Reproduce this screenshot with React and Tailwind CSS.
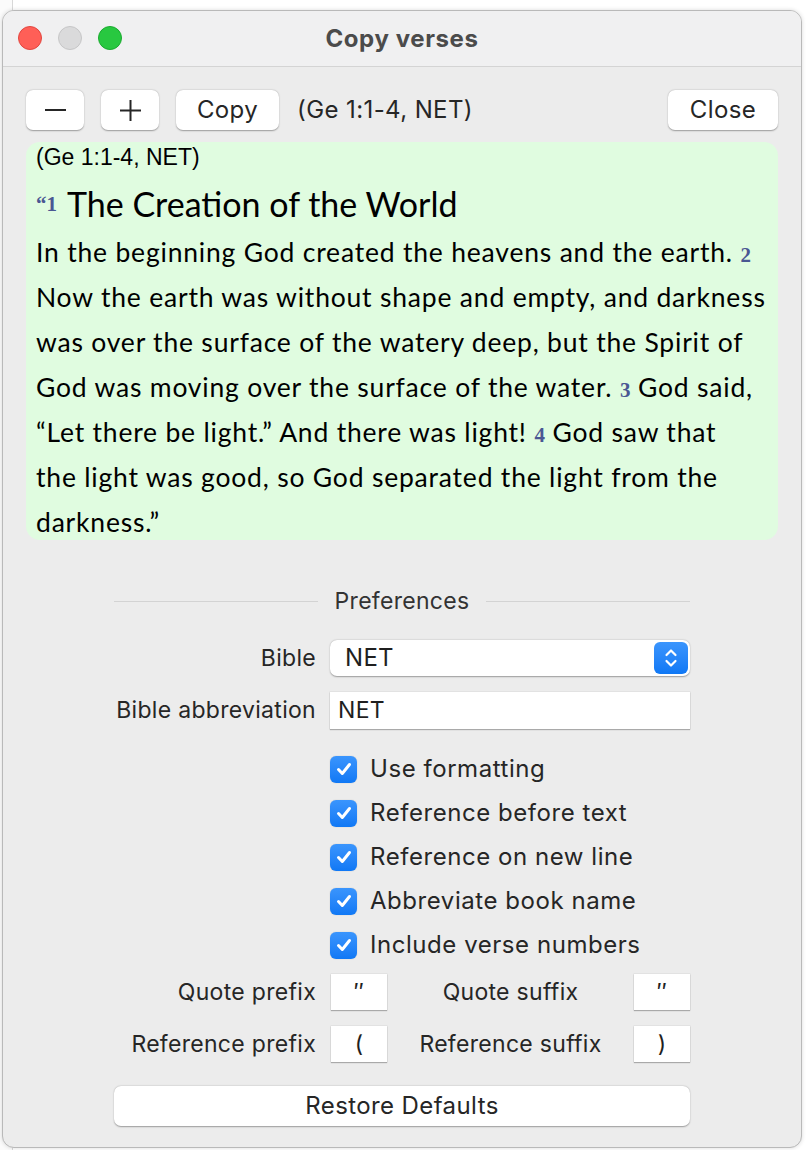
import React from 'react';

const ui = { fontFamily: 'Inter, "Liberation Sans", sans-serif' };
const book = { fontFamily: 'Lato, "Open Sans", sans-serif' };
const serif = { fontFamily: '"Liberation Serif", serif' };

function Btn({ children, className = '' }) {
  return (
    <div className={`h-[40px] rounded-[7px] bg-white shadow-[0_0.5px_1.5px_rgba(0,0,0,0.35)] flex items-center justify-center text-[24px] tracking-[0.4px] text-[#262626] ${className}`}>
      {children}
    </div>
  );
}

function Num({ n }) {
  return <span className="text-[21px] leading-none font-bold text-[#4a5793] tracking-normal" style={serif}>{n}</span>;
}

function Check({ label }) {
  return (
    <div className="h-[44px] flex items-center">
      <div className="w-[27px] h-[27px] rounded-[6px] bg-gradient-to-b from-[#3a95fd] to-[#0f78f5] flex items-center justify-center shadow-[0_0_1px_rgba(0,0,0,0.3)]">
        <svg width="18" height="18" viewBox="0 0 18 18" fill="none">
          <path d="M3.5 9.5 L7.3 13.5 L14.5 4.5" stroke="white" strokeWidth="3" strokeLinecap="round" strokeLinejoin="round" />
        </svg>
      </div>
      <span className="ml-[13px] text-[24px] tracking-[0.55px] text-[#262626]">{label}</span>
    </div>
  );
}

function Field({ children, className = '' }) {
  return (
    <div className={`h-[36px] bg-white shadow-[0_1px_1px_rgba(0,0,0,0.25),0_0_0_0.5px_rgba(0,0,0,0.08)] flex items-center text-[23px] tracking-[0.3px] text-[#1f1f1f] ${className}`}>
      {children}
    </div>
  );
}

const label = 'text-[23px] tracking-[0.3px] text-[#262626] whitespace-nowrap';

export default function App() {
  return (
    <div className="relative w-[806px] h-[1150px] bg-[#fbfbfb] overflow-hidden" style={ui}>
      {/* window behind */}
      <div className="absolute left-[12px] top-[-20px] w-[820px] h-[1200px] border border-[#d8d8d8] bg-white" />
      <div className="absolute left-[2px] top-[10px] w-[800px] h-[1138px] rounded-[12px] border border-[#b9b9b9] bg-[#ececec] overflow-hidden shadow-[0_0_4px_rgba(0,0,0,0.15)]">
        {/* title bar */}
        <div className="relative h-[56px] bg-[#f0f0f1] border-b border-[#d4d4d4] flex items-center justify-center">
          <div className="absolute left-[15px] top-[15px] flex gap-[16px]">
            <div className="w-[24px] h-[24px] rounded-full bg-[#ff5f57] border border-[#e2463f]" />
            <div className="w-[24px] h-[24px] rounded-full bg-[#dadadb] border border-[#c6c6c7]" />
            <div className="w-[24px] h-[24px] rounded-full bg-[#28c840] border border-[#1aab2f]" />
          </div>
          <span className="text-[24px] tracking-[0.6px] font-bold text-[#4b4b4b]">Copy verses</span>
        </div>

        {/* toolbar */}
        <div className="px-[23px] pt-[23px] flex items-center">
          <Btn className="w-[58px]">
            <svg width="21" height="4" viewBox="0 0 21 4"><rect x="0" y="1" width="21" height="2" fill="#262626" /></svg>
          </Btn>
          <Btn className="w-[58px] ml-[17px]">
            <svg width="21" height="21" viewBox="0 0 21 21"><rect x="0" y="9.5" width="21" height="2" fill="#262626" /><rect x="9.5" y="0" width="2" height="21" fill="#262626" /></svg>
          </Btn>
          <Btn className="w-[103px] ml-[17px]">Copy</Btn>
          <span className="ml-[18px] text-[24px] tracking-[0.4px] text-[#262626]">(Ge 1:1-4, NET)</span>
          <Btn className="w-[110px] ml-auto">Close</Btn>
        </div>

        {/* verse panel */}
        <div className="mx-[23px] mt-[12px] h-[398px] rounded-[14px] bg-[#e0fce0] pl-[10px] pt-[3px] text-black">
          <div className="h-[24px] leading-[24px] text-[23px]" style={{ fontFamily: '"Liberation Sans", sans-serif' }}>(Ge 1:1-4, NET)</div>
          <div className="mt-[12px] h-[45px] flex items-end whitespace-nowrap" style={book}>
            <span className="text-[21px] font-bold text-[#4a5793] mb-[6px]" style={serif}>“1</span>
            <span className="ml-[10px] text-[34px] leading-[45px]">The Creation of the World</span>
          </div>
          <div className="mt-[4px] text-[26.5px] tracking-[0.8px] leading-[45px] whitespace-nowrap" style={book}>
            In the beginning God created the heavens and the earth. <Num n="2" /><br />
            Now the earth was without shape and empty, and darkness<br />
            was over the surface of the watery deep, but the Spirit of<br />
            God was moving over the surface of the water. <Num n="3" /> God said,<br />
            “Let there be light.” And there was light! <Num n="4" /> God saw that<br />
            the light was good, so God separated the light from the<br />
            darkness.”
          </div>
        </div>

        {/* preferences */}
        <div className="ml-[111px] w-[576px]">
          <div className="mt-[48px] h-[26px] flex items-center gap-[17px]">
            <div className="flex-1 h-px bg-[#d3d3d3]" />
            <span className="text-[23px] tracking-[0.3px] text-[#333]">Preferences</span>
            <div className="flex-1 h-px bg-[#d3d3d3]" />
          </div>

          <div className="mt-[26px] flex items-center">
            <div className={`w-[202px] text-right ${label}`}>Bible</div>
            <div className="ml-[14px] flex-1 h-[36px] rounded-[7px] bg-white shadow-[0_0.5px_1.5px_rgba(0,0,0,0.35)] flex items-center pl-[15px] pr-[2px]">
              <span className="text-[24px] tracking-[0.3px] text-[#1f1f1f]">NET</span>
              <div className="ml-auto w-[34px] h-[32px] rounded-[6px] bg-gradient-to-b from-[#3a95fd] to-[#0f78f5] flex items-center justify-center">
                <svg width="14" height="22" viewBox="0 0 14 22" fill="none">
                  <path d="M2.5 8 L7 3.5 L11.5 8" stroke="white" strokeWidth="2.2" strokeLinecap="round" strokeLinejoin="round" />
                  <path d="M2.5 14 L7 18.5 L11.5 14" stroke="white" strokeWidth="2.2" strokeLinecap="round" strokeLinejoin="round" />
                </svg>
              </div>
            </div>
          </div>

          <div className="mt-[16px] flex items-center">
            <div className={`w-[202px] text-right ${label}`}>Bible abbreviation</div>
            <Field className="ml-[14px] flex-1 h-[37px] pl-[8px]">NET</Field>
          </div>

          <div className="mt-[18px] ml-[216px]">
            <Check label="Use formatting" />
            <Check label="Reference before text" />
            <Check label="Reference on new line" />
            <Check label="Abbreviate book name" />
            <Check label="Include verse numbers" />
          </div>

          <div className="mt-[7px] flex items-center">
            <div className={`w-[202px] text-right ${label}`}>Quote prefix</div>
            <Field className="ml-[15px] w-[56px] justify-center">″</Field>
            <div className={`flex-1 text-center ${label}`}>Quote suffix</div>
            <Field className="w-[56px] justify-center">″</Field>
          </div>

          <div className="mt-[16px] flex items-center">
            <div className={`w-[202px] text-right ${label}`}>Reference prefix</div>
            <Field className="ml-[15px] w-[56px] justify-center">(</Field>
            <div className={`flex-1 text-center ${label}`}>Reference suffix</div>
            <Field className="w-[56px] justify-center">)</Field>
          </div>

          <Btn className="mt-[24px] w-full">Restore Defaults</Btn>
        </div>
      </div>
    </div>
  );
}
